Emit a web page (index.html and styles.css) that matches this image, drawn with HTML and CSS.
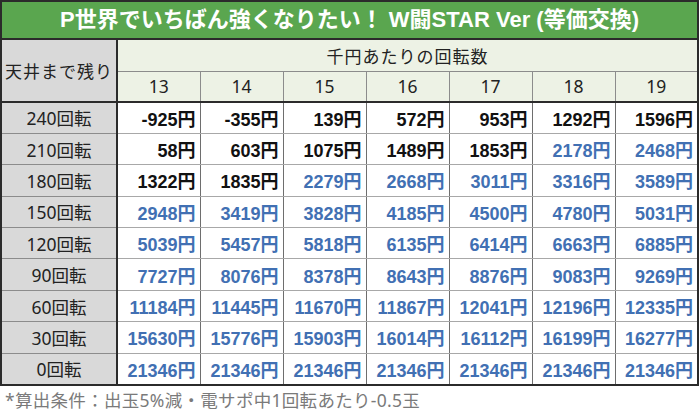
FILE: index.html
```html
<!DOCTYPE html>
<html lang="ja">
<head>
<meta charset="utf-8">
<link rel="stylesheet" href="styles.css">
</head>
<body>
<table class="tbl">
  <colgroup>
    <col class="c-label">
    <col class="c-val"><col class="c-val"><col class="c-val"><col class="c-val"><col class="c-val"><col class="c-val"><col class="c-val">
  </colgroup>
  <tr class="title-row"><th colspan="8" class="title">P世界でいちばん強くなりたい！ W闘STAR Ver (等価交換)</th></tr>
  <tr class="h1"><th rowspan="2" class="corner">天井まで残り</th><th colspan="7" class="hdr">千円あたりの回転数</th></tr>
  <tr class="h2"><th class="hdr">13</th><th class="hdr">14</th><th class="hdr">15</th><th class="hdr">16</th><th class="hdr">17</th><th class="hdr">18</th><th class="hdr">19</th></tr>
  <tr class="r"><th class="lab"><span class="lab-t">240回転</span></th><td>-925円</td><td>-355円</td><td>139円</td><td>572円</td><td>953円</td><td>1292円</td><td>1596円</td></tr>
  <tr class="r"><th class="lab"><span class="lab-t">210回転</span></th><td>58円</td><td>603円</td><td>1075円</td><td>1489円</td><td>1853円</td><td class="b">2178円</td><td class="b">2468円</td></tr>
  <tr class="r"><th class="lab"><span class="lab-t">180回転</span></th><td>1322円</td><td>1835円</td><td class="b">2279円</td><td class="b">2668円</td><td class="b">3011円</td><td class="b">3316円</td><td class="b">3589円</td></tr>
  <tr class="r"><th class="lab"><span class="lab-t">150回転</span></th><td class="b">2948円</td><td class="b">3419円</td><td class="b">3828円</td><td class="b">4185円</td><td class="b">4500円</td><td class="b">4780円</td><td class="b">5031円</td></tr>
  <tr class="r"><th class="lab"><span class="lab-t">120回転</span></th><td class="b">5039円</td><td class="b">5457円</td><td class="b">5818円</td><td class="b">6135円</td><td class="b">6414円</td><td class="b">6663円</td><td class="b">6885円</td></tr>
  <tr class="r"><th class="lab"><span class="lab-t">90回転</span></th><td class="b">7727円</td><td class="b">8076円</td><td class="b">8378円</td><td class="b">8643円</td><td class="b">8876円</td><td class="b">9083円</td><td class="b">9269円</td></tr>
  <tr class="r"><th class="lab"><span class="lab-t">60回転</span></th><td class="b">11184円</td><td class="b">11445円</td><td class="b">11670円</td><td class="b">11867円</td><td class="b">12041円</td><td class="b">12196円</td><td class="b">12335円</td></tr>
  <tr class="r"><th class="lab"><span class="lab-t">30回転</span></th><td class="b">15630円</td><td class="b">15776円</td><td class="b">15903円</td><td class="b">16014円</td><td class="b">16112円</td><td class="b">16199円</td><td class="b">16277円</td></tr>
  <tr class="r"><th class="lab"><span class="lab-t">0回転</span></th><td class="b">21346円</td><td class="b">21346円</td><td class="b">21346円</td><td class="b">21346円</td><td class="b">21346円</td><td class="b">21346円</td><td class="b">21346円</td></tr>
</table>
<p class="note">*算出条件：出玉5%減・電サポ中1回転あたり-0.5玉</p>
</body>
</html>
```
FILE: styles.css
```css
html, body {
  margin: 0;
  padding: 0;
  background: #ffffff;
}
body {
  width: 700px;
  height: 414px;
  overflow: hidden;
  font-family: "Noto Sans", "Noto Sans CJK JP", sans-serif;
}
.tbl {
  border-collapse: collapse;
  table-layout: fixed;
  width: 699px;
  border: 2px solid #2b2b2b;
}
.c-label { width: 116px; }
.c-val { width: 83px; }
.tbl th, .tbl td {
  padding: 0;
  box-sizing: border-box;
}
.title {
  height: 38px;
  background: #5aa64f;
  color: #ffffff;
  font-family: "Liberation Sans", "Noto Sans CJK JP", sans-serif;
  font-weight: 700;
  font-size: 22px;
  text-align: center;
  border-bottom: 2px solid #2b2b2b;
  line-height: 36px;
}
.corner {
  background: #d9d9d9;
  font-weight: 400;
  font-size: 17px;
  color: #222;
  border-right: 2px solid #2b2b2b;
  border-bottom: 2px solid #2b2b2b;
  letter-spacing: 1px;
  font-family: "Noto Sans", "Noto Sans CJK JP", sans-serif;
}
.hdr {
  background: #edf2e5;
  font-weight: 400;
  font-size: 17.5px;
  color: #222;
  border: 1px solid #8c8c8c;
  font-family: "Noto Sans", "Noto Sans CJK JP", sans-serif;
}
.h1 { height: 32px; }
.h1 .hdr { letter-spacing: 1px; font-size: 17px; }
.h2 { height: 31px; }
.h2 .hdr { border-bottom: 2px solid #2b2b2b; }
.r { height: 31.4px; }
.lab {
  background: #d9d9d9;
  font-weight: 400;
  color: #222;
  border-right: 2px solid #2b2b2b;
  border-bottom: 1px solid #8c8c8c;
}
.lab-t {
  display: flex;
  justify-content: center;
  font-size: 17.5px;
  font-family: "Noto Sans", "Noto Sans CJK JP", sans-serif;
}
.r td {
  text-align: right;
  padding-right: 4px;
  font-family: "Liberation Sans", "Noto Sans CJK JP", sans-serif;
  font-weight: 700;
  font-size: 18px;
  color: #111;
  border-left: 1px solid #6e6e6e;
  border-bottom: 1px solid #a8a8a8;
}
.r td.b {
  color: #4170b3;
}
.note {
  margin: 3px 0 0 5px;
  font-size: 17.5px;
  line-height: 22px;
  color: #7a7a7a;
  letter-spacing: 0.3px;
  font-family: "Noto Sans", "Noto Sans CJK JP", sans-serif;
}
```
